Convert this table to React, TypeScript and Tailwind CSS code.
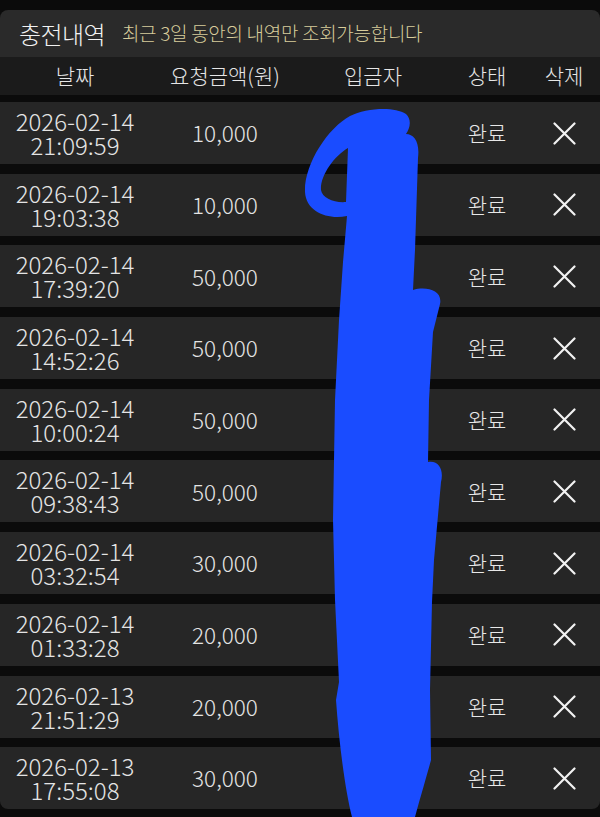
import React from "react";

type Row = { date: string; time: string; amount: string };

const rows: Row[] = [
  { date: "2026-02-14", time: "21:09:59", amount: "10,000" },
  { date: "2026-02-14", time: "19:03:38", amount: "10,000" },
  { date: "2026-02-14", time: "17:39:20", amount: "50,000" },
  { date: "2026-02-14", time: "14:52:26", amount: "50,000" },
  { date: "2026-02-14", time: "10:00:24", amount: "50,000" },
  { date: "2026-02-14", time: "09:38:43", amount: "50,000" },
  { date: "2026-02-14", time: "03:32:54", amount: "30,000" },
  { date: "2026-02-14", time: "01:33:28", amount: "20,000" },
  { date: "2026-02-13", time: "21:51:29", amount: "20,000" },
  { date: "2026-02-13", time: "17:55:08", amount: "30,000" },
];

const cols = "grid grid-cols-[150px_150px_146px_82px_1fr] items-center text-center";

const CloseIcon = () => (
  <svg width="23" height="23" viewBox="0 0 23 23" className="mx-auto">
    <path d="M1.5 1.5 L21.5 21.5 M21.5 1.5 L1.5 21.5" stroke="#f2f2f2" strokeWidth="2.2" strokeLinecap="round" />
  </svg>
);

// 입금자 칸을 덮은 파란 낙서
const Scribble = () => (
  <svg
    className="absolute left-0 top-0 pointer-events-none"
    width="600"
    height="817"
    viewBox="0 0 600 817"
  >
    <path
      fillRule="evenodd"
      fill="#1a4cff"
      d="M350 116 C366 108 394 106 406 114 C412 120 410 128 406 134 C414 134 420 142 418 158 L415 250 L413 290 C426 286 443 290 440 304 L433 332 L429 400 L428 462 C439 460 444 470 441 482 L434 560 L432 602 L430 690 L431 760 C427 775 421 795 415 817 L352 817 C345 790 339 742 336 700 L339 682 L335 600 L333 520 L335 400 L339 320 L343 262 L347 216 C328 220 306 212 305 192 C304 164 328 128 350 116 Z M321 190 C320 176 334 156 348 148 L346 202 C334 203 322 198 321 190 Z"
    />
  </svg>
);

export default function App() {
  return (
    <div
      className="relative w-[600px] min-h-[817px] bg-[#0b0b0b] pt-[10px] text-[#ececec] font-light"
      style={{ fontFamily: '"Noto Sans CJK KR", "Noto Sans", sans-serif' }}
    >
      <div className="h-[47px] bg-[#2a2a2a] rounded-t-[8px] flex items-center pl-[19px] gap-[17px]">
        <span className="text-[24px] text-[#f2f2f2] tracking-[-0.6px]">충전내역</span>
        <span className="text-[19px] text-[#d8cd9b] tracking-[-0.3px]">최근 3일 동안의 내역만 조회가능합니다</span>
      </div>

      <div className={`${cols} h-[38px] bg-[#1b1b1b] text-[21px] text-[#e6e6e6]`}>
        <span>날짜</span>
        <span>요청금액(원)</span>
        <span>입금자</span>
        <span>상태</span>
        <span>삭제</span>
      </div>

      <div className="flex flex-col gap-[9.7px] pt-[7px]">
        {rows.map((r, i) => (
          <div
            key={i}
            className={`${cols} h-[62px] bg-[#262626] ${i === rows.length - 1 ? "rounded-b-[8px]" : ""}`}
          >
            <div className="flex flex-col text-[24px] leading-[24px] text-[#e4e4e4]">
              <span>{r.date}</span>
              <span>{r.time}</span>
            </div>
            <span className="text-[22.5px] text-[#e4e4e4]">{r.amount}</span>
            <span />
            <span className="text-[21px] text-[#e8e8e8]">완료</span>
            <CloseIcon />
          </div>
        ))}
      </div>

      <Scribble />
    </div>
  );
}
